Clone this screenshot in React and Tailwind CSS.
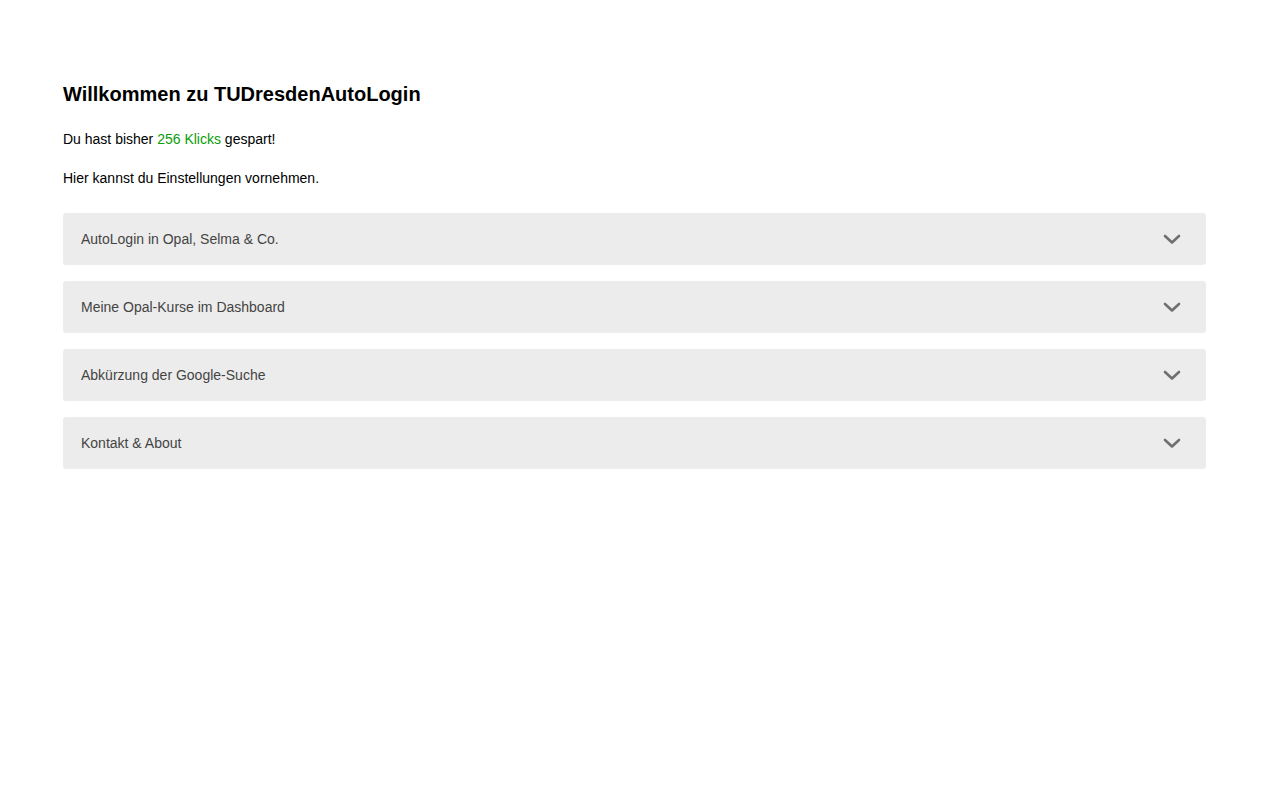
import React, { useState } from "react";

const sections = [
  "AutoLogin in Opal, Selma & Co.",
  "Meine Opal-Kurse im Dashboard",
  "Abkürzung der Google-Suche",
  "Kontakt & About",
];

export default function App() {
  const [open, setOpen] = useState(null);

  return (
    <div className="min-h-screen bg-white font-['Liberation_Sans',Arial,sans-serif] text-black">
      <div className="pl-[63px] pr-[74px] pt-[81px]">
        <h1 className="text-[20px] font-bold leading-[26px]">Willkommen zu TUDresdenAutoLogin</h1>
        <p className="mt-[23px] text-[14px] leading-[18px]">
          Du hast bisher <span className="text-[#0a9d0a]">256 Klicks</span> gespart!
        </p>
        <p className="mt-[21px] text-[14px] leading-[18px]">Hier kannst du Einstellungen vornehmen.</p>

        <div className="mt-[26px] flex flex-col gap-4">
          {sections.map((title, i) => (
            <div key={title}>
              <button
                type="button"
                onClick={() => setOpen(open === i ? null : i)}
                className="flex h-[52px] w-full items-center justify-between rounded-[3px] bg-[#ececec] pl-[18px] pr-[25px] text-left text-[14px] text-[#444]"
              >
                <span>{title}</span>
                <Chevron up={open === i} />
              </button>
            </div>
          ))}
        </div>
      </div>
    </div>
  );
}

function Chevron({ up }) {
  return (
    <svg
      width="18"
      height="12"
      viewBox="0 0 18 12"
      className={up ? "rotate-180" : ""}
      aria-hidden="true"
    >
      <path d="M2 3l7 6.5L16 3" fill="none" stroke="#6f6f6f" strokeWidth="2.6" strokeLinecap="round" strokeLinejoin="round" />
    </svg>
  );
}
